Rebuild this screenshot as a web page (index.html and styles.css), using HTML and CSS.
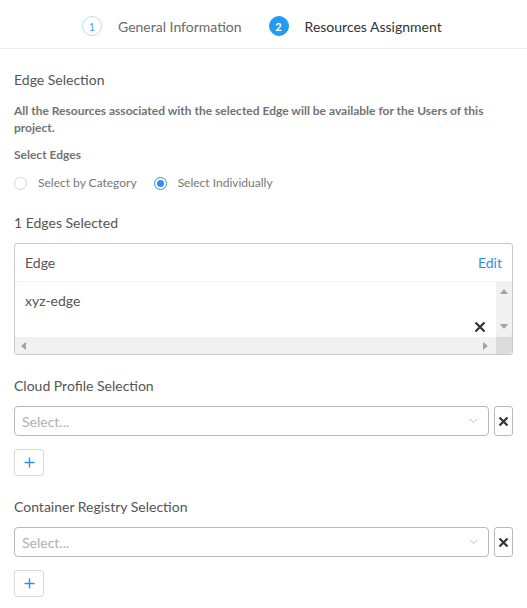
FILE: index.html
```html
<!DOCTYPE html>
<html>
<head>
<meta charset="utf-8">
<link rel="stylesheet" href="styles.css">
</head>
<body>
<div class="page">
  <div class="steps">
    <div class="step">
      <span class="step-num">1</span>
      <span class="step-label">General Information</span>
    </div>
    <div class="step active">
      <span class="step-num">2</span>
      <span class="step-label">Resources Assignment</span>
    </div>
  </div>

  <div class="content">
    <h3 class="section-title">Edge Selection</h3>
    <p class="desc">All the Resources associated with the selected Edge will be available for the Users of this project.</p>
    <div class="field-label">Select Edges</div>
    <div class="radios">
      <label class="radio"><span class="radio-dot"></span>Select by Category</label>
      <label class="radio checked"><span class="radio-dot"></span>Select Individually</label>
    </div>

    <div class="count">1 Edges Selected</div>
    <div class="table">
      <div class="table-head">
        <span>Edge</span>
        <span class="edit">Edit</span>
      </div>
      <div class="table-body">
        <div class="table-main">
          <div class="row-text">xyz-edge</div>
          <svg class="row-x" width="12" height="12" viewBox="0 0 12 12"><path d="M1.5 1.5L10.5 10.5M10.5 1.5L1.5 10.5" stroke="#333" stroke-width="2.2"/></svg>
        </div>
        <div class="vscroll">
          <svg width="8" height="5" viewBox="0 0 8 5"><path d="M0 5L4 0L8 5Z" fill="#a3a3a3"/></svg>
          <svg width="8" height="5" viewBox="0 0 8 5"><path d="M0 0L4 5L8 0Z" fill="#a3a3a3"/></svg>
        </div>
      </div>
      <div class="hscroll">
        <div class="hbar">
          <svg width="5" height="8" viewBox="0 0 5 8"><path d="M5 0L0 4L5 8Z" fill="#a3a3a3"/></svg>
          <svg width="5" height="8" viewBox="0 0 5 8"><path d="M0 0L5 4L0 8Z" fill="#a3a3a3"/></svg>
        </div>
        <div class="corner"></div>
      </div>
    </div>

    <h3 class="section-title sel-title">Cloud Profile Selection</h3>
    <div class="select-row">
      <div class="select">
        <span class="placeholder">Select...</span>
        <svg width="9" height="6" viewBox="0 0 9 6"><path d="M1 1L4.5 4.5L8 1" stroke="#c4c4c4" stroke-width="1" fill="none"/></svg>
      </div>
      <button class="clear"><svg width="11" height="11" viewBox="0 0 11 11"><path d="M1.5 1.5L9.5 9.5M9.5 1.5L1.5 9.5" stroke="#333" stroke-width="2.2"/></svg></button>
    </div>
    <button class="add"><svg width="11" height="11" viewBox="0 0 11 11"><path d="M5.5 0.5V10.5M0.5 5.5H10.5" stroke="#2a8ff0" stroke-width="1.4"/></svg></button>

    <h3 class="section-title sel-title2">Container Registry Selection</h3>
    <div class="select-row">
      <div class="select">
        <span class="placeholder">Select...</span>
        <svg width="9" height="6" viewBox="0 0 9 6"><path d="M1 1L4.5 4.5L8 1" stroke="#c4c4c4" stroke-width="1" fill="none"/></svg>
      </div>
      <button class="clear"><svg width="11" height="11" viewBox="0 0 11 11"><path d="M1.5 1.5L9.5 9.5M9.5 1.5L1.5 9.5" stroke="#333" stroke-width="2.2"/></svg></button>
    </div>
    <button class="add"><svg width="11" height="11" viewBox="0 0 11 11"><path d="M5.5 0.5V10.5M0.5 5.5H10.5" stroke="#2a8ff0" stroke-width="1.4"/></svg></button>
  </div>
</div>
</body>
</html>
```

FILE: styles.css
```css
* { box-sizing: border-box; }
html, body { margin: 0; padding: 0; background: #fff; }
body { font-family: Lato, "Noto Sans", sans-serif; color: #555; }

.page { width: 527px; }

.steps {
  height: 49px;
  border-bottom: 1px solid #eeeeee;
  display: flex;
  align-items: center;
  padding-left: 82px;
  padding-top: 4px;
  gap: 27px;
}
.step { display: flex; align-items: center; gap: 16px; }
.step-num {
  width: 20px; height: 20px;
  border-radius: 50%;
  border: 1px solid #b9dcfa;
  color: #4a9fea;
  font-size: 11px;
  display: flex; align-items: center; justify-content: center;
}
.step-label { font-size: 14px; color: #6a6a6a; }
.step.active .step-num { background: #249bf0; border-color: #249bf0; color: #fff; font-weight: 700; }
.step.active .step-label { color: #333; }

.content { padding: 22px 14px 0 14px; }

.section-title { margin: 0; font-size: 14px; font-weight: 400; color: #555; line-height: 18px; }

.desc { margin: 13px 0 0 0; font-size: 12px; font-weight: 700; color: #737373; line-height: 17px; }

.field-label { margin-top: 11px; font-size: 12px; font-weight: 700; color: #737373; line-height: 16px; }

.radios { display: flex; margin-top: 12px; gap: 17px; }
.radio { display: flex; align-items: center; font-size: 12px; color: #777; gap: 11px; line-height: 16px; }
.radio-dot {
  width: 13px; height: 13px; border-radius: 50%;
  border: 1px solid #d6d6d6; background: #fff;
  display: inline-flex; align-items: center; justify-content: center;
}
.radio.checked .radio-dot { border-color: #2a8ff0; }
.radio.checked .radio-dot::after {
  content: ""; width: 7px; height: 7px; border-radius: 50%; background: #2a8ff0;
}

.count { margin-top: 23px; font-size: 14px; color: #555; line-height: 18px; }

.table {
  margin-top: 11px;
  border: 1px solid #c8c8c8;
  border-radius: 3px;
  overflow: hidden;
}
.table-head {
  height: 38px;
  display: flex; align-items: center; justify-content: space-between;
  padding: 0 10px;
  border-bottom: 1px solid #f0f0f0;
  font-size: 14px; color: #555;
}
.edit { color: #2a8ff0; }
.table-body { display: flex; height: 55px; }
.table-main { flex: 1; position: relative; padding: 10px 10px 0 10px; }
.row-text { font-size: 14px; color: #555; line-height: 18px; }
.row-x { position: absolute; right: 10px; bottom: 4px; }
.vscroll {
  width: 16px; background: #f1f1f1;
  display: flex; flex-direction: column; justify-content: space-between; align-items: center;
  padding: 7px 0 8px;
}
.hscroll { display: flex; height: 17px; }
.hbar {
  flex: 1; background: #f1f1f1;
  display: flex; align-items: center; justify-content: space-between;
  padding: 0 8px 0 6px;
}
.corner { width: 16px; background: #dcdcdc; }

.sel-title { margin-top: 22px; }
.sel-title2 { margin-top: 22px; }
.select-row { display: flex; gap: 5px; margin-top: 11px; }
.select {
  flex: 1; height: 30px;
  border: 1px solid #b8b8c0; border-radius: 4px;
  display: flex; align-items: center; justify-content: space-between;
  padding: 0 10px 0 7px;
}
.placeholder { font-size: 14px; color: #b0b0b0; }
.clear {
  width: 19px; height: 30px; padding: 0;
  border: 1px solid #b8b8c0; border-radius: 3px; background: #fff;
  display: flex; align-items: center; justify-content: center;
}
.add {
  margin-top: 13px;
  width: 30px; height: 27px; padding: 0;
  border: 1px solid #d8d8d8; border-radius: 3px; background: #fff;
  display: flex; align-items: center; justify-content: center;
}
```
